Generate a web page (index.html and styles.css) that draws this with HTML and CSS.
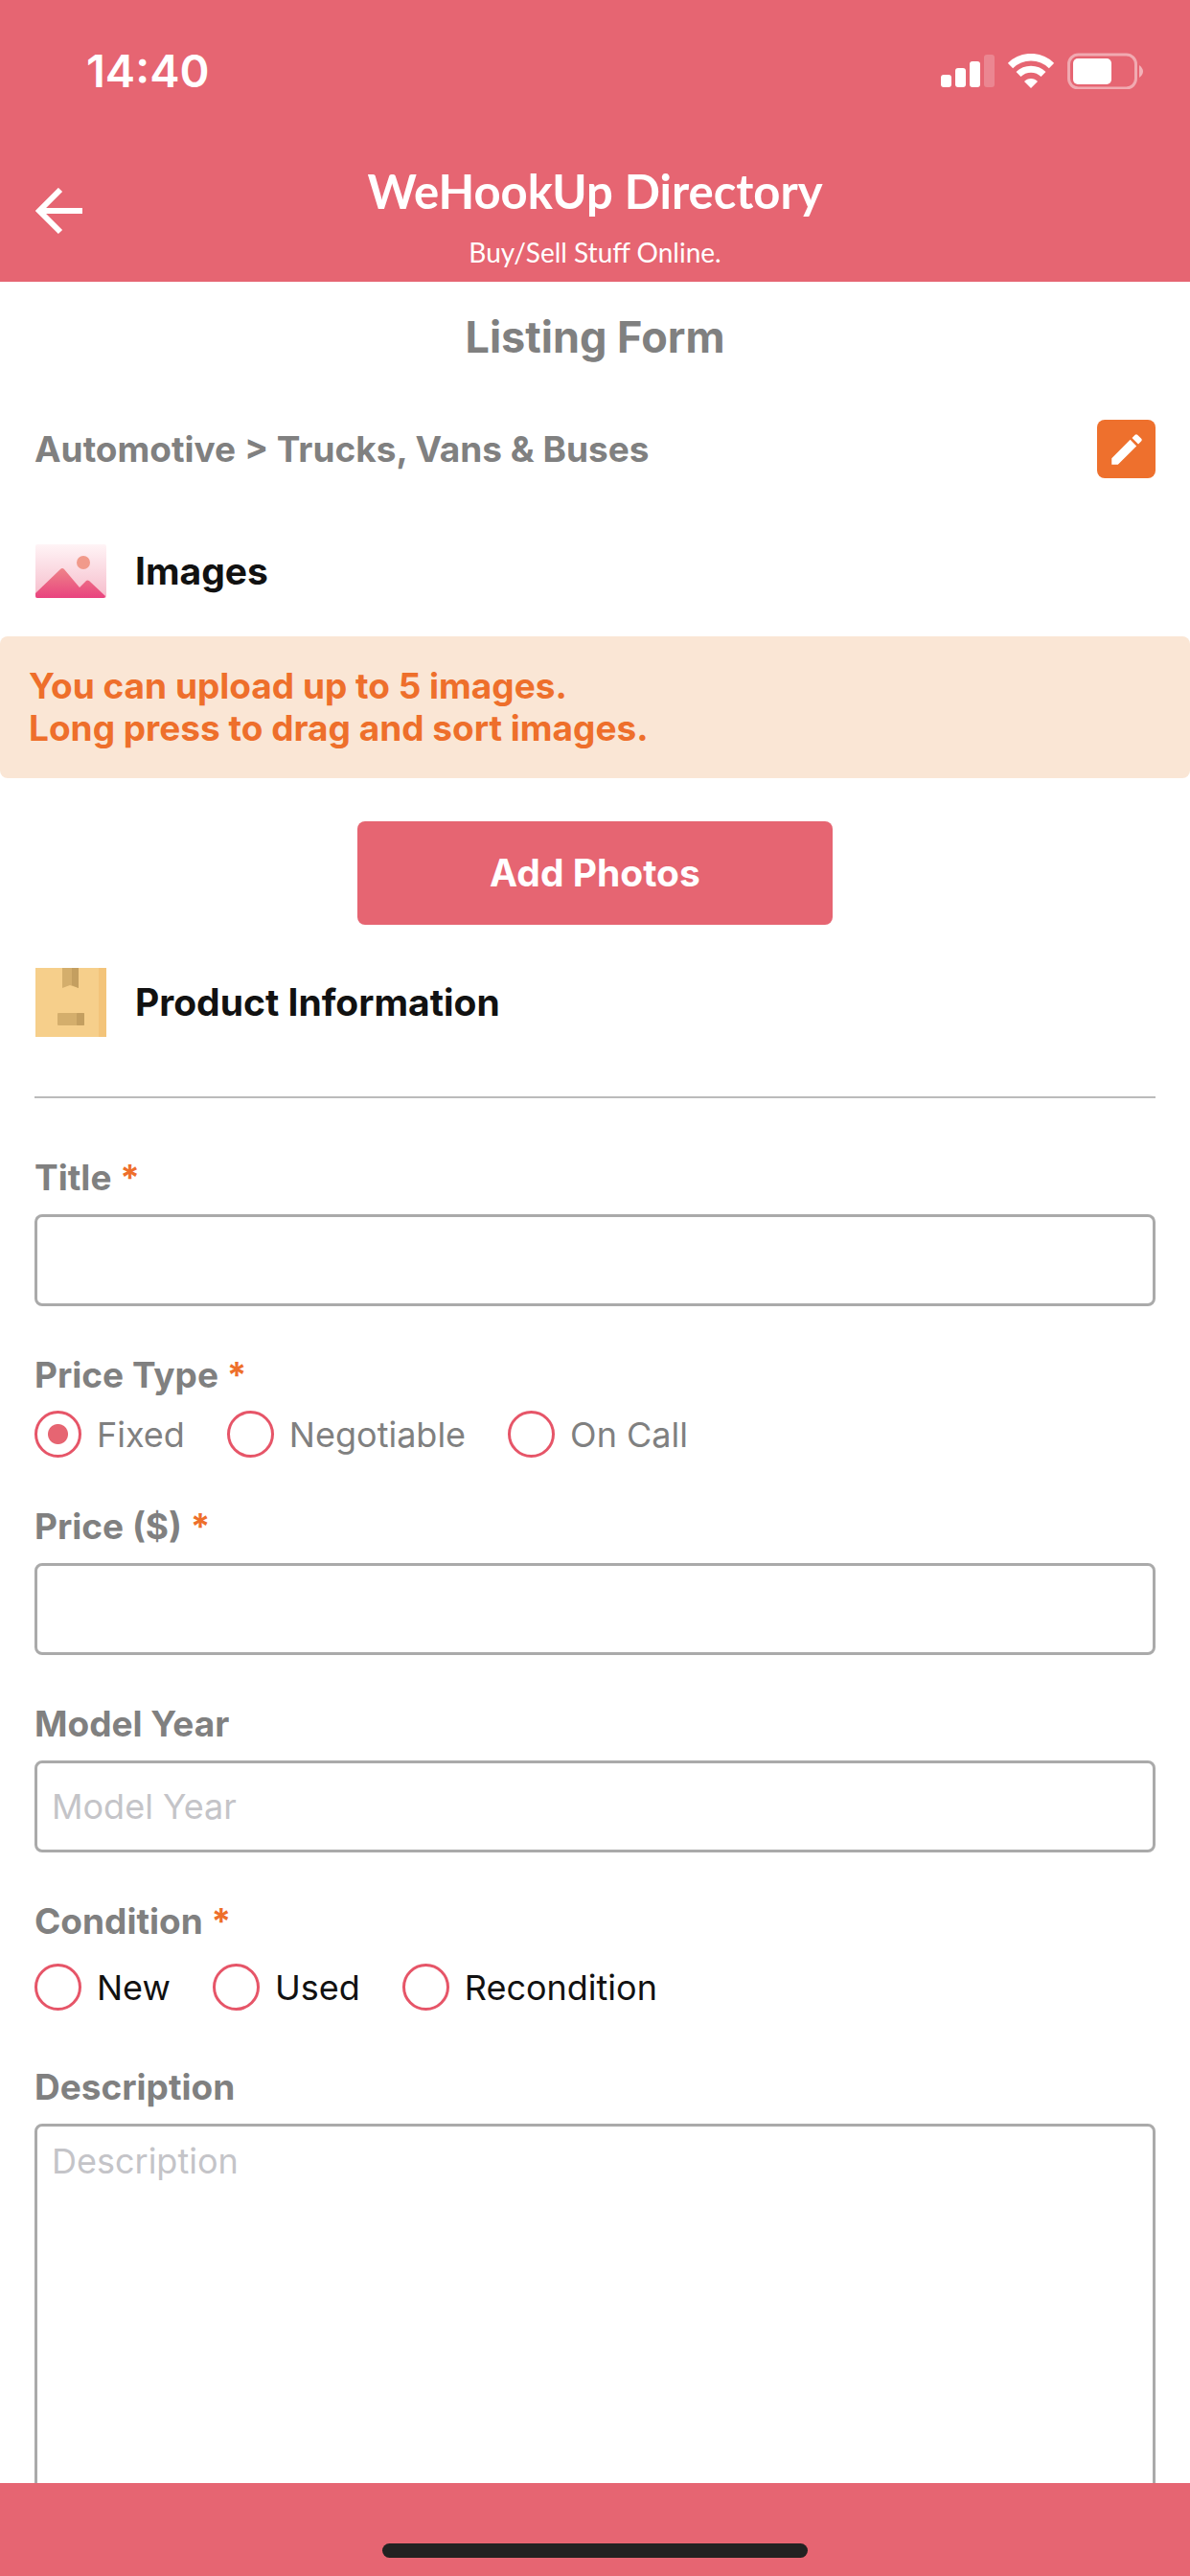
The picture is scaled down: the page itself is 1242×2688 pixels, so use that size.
FILE: index.html
```html
<!DOCTYPE html>
<html lang="en">

<head>
    <meta charset="UTF-8">
    <meta name="viewport" content="width=device-width, initial-scale=1.0">
    <title>Listing Form</title>
    <link rel="stylesheet" href="styles.css">
</head>

<body>
    <header class="header">
        <div class="status-bar">
            <span class="time">14:40</span>
            <div class="status-icons">
                <svg width="56" height="34" viewBox="0 0 56 34" fill="#fff">
                    <rect x="0" y="21" width="11" height="13" rx="3" />
                    <rect x="15" y="14" width="11" height="20" rx="3" />
                    <rect x="30" y="7" width="11" height="27" rx="3" />
                    <rect x="45" y="0" width="11" height="34" rx="3" opacity="0.22" />
                </svg>
                <svg width="48" height="36" viewBox="0 0 48 36">
                    <path d="M2.500 12.500 A30.500 30.500 0 0 1 45.500 12.500" fill="none" stroke="#fff" stroke-width="7.500" />
                    <path d="M11 21.500 A18.500 18.500 0 0 1 37 21.500" fill="none" stroke="#fff" stroke-width="7" />
                    <path d="M17 29 A9.500 9.500 0 0 1 31 29 L24 36 Z" fill="#fff" />
                </svg>
                <svg width="80" height="38" viewBox="0 0 80 38">
                    <rect x="1.500" y="2" width="70" height="35" rx="10" fill="none" stroke="#fff" stroke-opacity="0.45" stroke-width="3" />
                    <rect x="6" y="6" width="40" height="27" rx="5" fill="#fff" />
                    <path d="M75 13 Q79 16 79 19.500 Q79 23 75 26 Z" fill="#fff" opacity="0.5" />
                </svg>
            </div>
        </div>
        <nav class="nav-bar">
            <a href="#" class="back" aria-label="Back">
                <svg width="50" height="50" viewBox="0 0 50 50" fill="none" stroke="#fff" stroke-width="6">
                    <path d="M50 24 H6 M27 2 L5 24 L27 46" />
                </svg>
            </a>
            <div class="brand">
                <p class="brand-name">WeHookUp Directory</p>
                <p class="brand-tagline">Buy/Sell Stuff Online.</p>
            </div>
        </nav>
    </header>

    <main class="content">
        <h1>Listing Form</h1>

        <div class="category">
            <span>Automotive &gt; Trucks, Vans &amp; Buses</span>
            <button type="button" class="edit-button" aria-label="Edit category">
                <svg width="42" height="42" viewBox="0 0 24 24" fill="#fff">
                    <path d="M3 17.250V21h3.750L17.810 9.940l-3.750-3.750L3 17.250zM20.710 7.040a1 1 0 0 0 0-1.410l-2.340-2.340a1 1 0 0 0-1.410 0l-1.830 1.830 3.750 3.750 1.830-1.830z" />
                </svg>
            </button>
        </div>

        <section>
            <h2 class="images-heading">
                <svg width="74" height="56" viewBox="0 0 74 56">
                    <defs>
                        <linearGradient id="sky" x1="0" y1="0" x2="0" y2="1">
                            <stop offset="0" stop-color="#fff4f6" />
                            <stop offset="1" stop-color="#f6bccb" />
                        </linearGradient>
                        <linearGradient id="hills" x1="0" y1="0" x2="0" y2="1">
                            <stop offset="0" stop-color="#ee8489" />
                            <stop offset="1" stop-color="#e9437f" />
                        </linearGradient>
                    </defs>
                    <rect width="74" height="56" rx="2" fill="url(#sky)" />
                    <circle cx="50" cy="19" r="7" fill="#f19a8b" />
                    <path d="M0 51 L26 26 Q28 24 30 26 L46 45 L53 38 Q54 37 56 38 L73 54 Q73 56 71 56 H2 Q0 56 0 54 Z" fill="url(#hills)" />
                </svg>
                Images
            </h2>
            <p class="notice">
                You can upload up to 5 images.<br>
                Long press to drag and sort images.
            </p>
            <button type="button" class="add-photos">Add Photos</button>
        </section>

        <section>
            <h2>
                <svg width="74" height="72" viewBox="0 0 74 72">
                    <rect width="74" height="72" fill="#f6cf8b" />
                    <rect x="66" width="8" height="72" fill="#f3c47a" />
                    <path d="M28 0 H45 V21 L36 18 L28 21 Z" fill="#d4ae6c" />
                    <path d="M38 0 H45 V21 L38 18 Z" fill="#c49f60" />
                    <rect x="23" y="47" width="28" height="13" rx="1" fill="#d4ae6c" />
                    <rect x="43" y="47" width="8" height="13" rx="1" fill="#c49f60" />
                </svg>
                Product Information
            </h2>

            <form class="listing-form">
                <div class="field">
                    <label for="title">Title <span class="required">*</span></label>
                    <input type="text" id="title" required>
                </div>

                <fieldset class="field price-type">
                    <legend>Price Type <span class="required">*</span></legend>
                    <div class="options">
                        <label><input type="radio" name="price-type" checked>Fixed</label>
                        <label><input type="radio" name="price-type">Negotiable</label>
                        <label><input type="radio" name="price-type">On Call</label>
                    </div>
                </fieldset>

                <div class="field">
                    <label for="price">Price ($) <span class="required">*</span></label>
                    <input type="text" id="price" required>
                </div>

                <div class="field">
                    <label for="model-year">Model Year</label>
                    <input type="text" id="model-year" placeholder="Model Year">
                </div>

                <fieldset class="field condition">
                    <legend>Condition <span class="required">*</span></legend>
                    <div class="options">
                        <label><input type="radio" name="condition">New</label>
                        <label><input type="radio" name="condition">Used</label>
                        <label><input type="radio" name="condition">Recondition</label>
                    </div>
                </fieldset>

                <div class="field">
                    <label for="description">Description</label>
                    <textarea id="description" rows="12" placeholder="Description"></textarea>
                </div>
            </form>
        </section>
    </main>

    <footer class="bottom-bar">
        <div class="home-indicator"></div>
    </footer>
</body>

</html>
```
FILE: styles.css
```css
* {
    margin: 0;
    padding: 0;
    box-sizing: border-box;
}

body {
    display: flex;
    flex-direction: column;
    height: 100vh;
    background-color: #fff;
    font-family: Inter, "Liberation Sans", sans-serif;
    font-size: 36px;
    line-height: 44px;
    color: #808080;
}

svg {
    display: block;
    flex-shrink: 0;
}

button,
input,
textarea {
    font: inherit;
}

/* header */
.header {
    flex-shrink: 0;
    background-color: #e66572;
    color: #fff;
}

.status-bar {
    display: flex;
    justify-content: space-between;
    align-items: center;
    height: 148px;
    padding: 0 48px 0 90px;
}

.time {
    font-size: 47px;
    font-weight: 600;
}

.status-icons {
    display: flex;
    align-items: center;
    gap: 14px;
}

.nav-bar {
    display: grid;
    grid-template-columns: 1fr auto 1fr;
    align-items: center;
    height: 146px;
    padding: 0 36px;
}

.brand {
    padding-top: 8px;
    font-family: Lato, sans-serif;
    text-align: center;
}

.brand-name {
    margin-bottom: 12px;
    font-size: 49px;
    font-weight: 700;
    line-height: 64px;
}

.brand-tagline {
    font-size: 28px;
    line-height: 40px;
}

/* content */
.content {
    flex: 1;
    min-height: 0;
    overflow-y: auto;
    scrollbar-width: none;
}

h1 {
    padding: 32px 36px;
    font-size: 45px;
    font-weight: 700;
    line-height: 52px;
    text-align: center;
}

.category {
    display: flex;
    justify-content: space-between;
    align-items: center;
    padding: 28px 36px;
    font-size: 37px;
    font-weight: 700;
}

.edit-button {
    display: flex;
    justify-content: center;
    align-items: center;
    width: 61px;
    height: 61px;
    background-color: #ee702d;
    border: none;
    border-radius: 8px;
    cursor: pointer;
}

h2 {
    display: flex;
    align-items: center;
    gap: 30px;
    padding: 0 37px;
    font-size: 39px;
    font-weight: 700;
    color: #111;
}

.images-heading {
    padding-top: 41px;
    padding-bottom: 40px;
}

.notice {
    padding: 30px;
    background-color: #fae6d5;
    border-radius: 8px;
    font-size: 37px;
    font-weight: 700;
    color: #ee6f2b;
}

.add-photos {
    display: block;
    width: 40%;
    height: 108px;
    margin: 45px auto;
    background-color: #e66572;
    border: none;
    border-radius: 8px;
    font-size: 39px;
    font-weight: 700;
    color: #fff;
    cursor: pointer;
}

/* form */
.listing-form {
    display: flex;
    flex-direction: column;
    gap: 50px;
    margin: 62px 36px 0;
    padding-top: 61px;
    border-top: 2px solid #bbb;
}

.field {
    display: flex;
    flex-direction: column;
    gap: 16px;
    border: none;
}

.field > label,
legend {
    font-size: 37px;
    font-weight: 700;
}

.required {
    color: #ee6f2b;
}

input[type="text"],
textarea {
    display: block;
    width: 100%;
    padding: 23px 15px;
    background-color: #fff;
    border: 3px solid #aaa;
    border-radius: 8px;
    color: #111;
}

textarea {
    padding-top: 14px;
    resize: none;
}

::placeholder {
    color: #c4c4c8;
}

.options {
    display: flex;
    gap: 44px;
    padding-top: 15px;
}

.options label {
    display: flex;
    align-items: center;
    gap: 16px;
}

.condition .options {
    padding: 22px 0 8px;
    color: #111;
}

input[type="radio"] {
    appearance: none;
    width: 49px;
    height: 49px;
    border: 3px solid #e65568;
    border-radius: 50%;
}

input[type="radio"]:checked {
    background: radial-gradient(circle, #e66572 10px, transparent 11px);
}

/* bottom */
.bottom-bar {
    display: flex;
    justify-content: center;
    flex-shrink: 0;
    padding: 63px 0 19px;
    background-color: #e66572;
}

.home-indicator {
    width: 444px;
    height: 15px;
    background-color: #222;
    border-radius: 8px;
}
```
